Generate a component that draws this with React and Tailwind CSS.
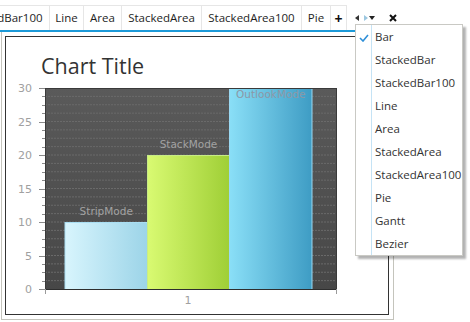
import React from "react";

const tabs = [
    { label: "StackedBar100", w: "w-[94px]", shift: "-ml-[44px]" },
    { label: "Line", w: "w-[34px]" },
    { label: "Area", w: "w-[38px]" },
    { label: "StackedArea", w: "w-[80px]" },
    { label: "StackedArea100", w: "w-[100px]" },
    { label: "Pie", w: "w-[29px]" },
];

const menuItems = ["Bar", "StackedBar", "StackedBar100", "Line", "Area", "StackedArea", "StackedArea100", "Pie", "Gantt", "Bezier"];

// plot geometry, in svg units (svg origin sits at page 6,37)
const plot = { x: 39, y: 51, w: 292, h: 201 };
const perUnit = plot.h / 30;

function yFor(v) {
    return plot.y + plot.h - v * perUnit;
}

function Chart() {
    const grid = [];
    for (let i = 1; i < 24; i++) {
        grid.push(plot.y + i * (plot.h / 24));
    }
    const minor = [];
    for (let i = 0; i <= 24; i++) {
        if (i % 4 !== 0) minor.push(plot.y + i * (plot.h / 24));
    }
    const majors = [0, 5, 10, 15, 20, 25, 30];

    const bars = [
        { x: 59, w: 82.5, v: 10, grad: "strip", stroke: "#a9def2", label: "StripMode" },
        { x: 141.5, w: 82, v: 20, grad: "stack", stroke: "#c8ec86", label: "StackMode" },
        { x: 223.5, w: 82.5, v: 30, grad: "outlook", stroke: "#9ad8f2", label: "OutlookMode" },
    ];

    return (
        <svg width="382" height="277" className="block">
            <defs>
                <linearGradient id="plotbg" x1="0" y1="0" x2="0" y2="1">
                    <stop offset="0" stopColor="#5a5a5a" />
                    <stop offset="1" stopColor="#474747" />
                </linearGradient>
                <linearGradient id="strip" x1="0" y1="0" x2="1" y2="0">
                    <stop offset="0" stopColor="#d8f5fd" />
                    <stop offset="1" stopColor="#9cd4e8" />
                </linearGradient>
                <linearGradient id="stack" x1="0" y1="0" x2="1" y2="0">
                    <stop offset="0" stopColor="#d9fa72" />
                    <stop offset="1" stopColor="#9fcf36" />
                </linearGradient>
                <linearGradient id="outlook" x1="0" y1="0" x2="1" y2="0">
                    <stop offset="0" stopColor="#8adff7" />
                    <stop offset="1" stopColor="#3e9cc4" />
                </linearGradient>
                <clipPath id="plotclip">
                    <rect x={plot.x} y={plot.y} width={plot.w} height={plot.h} />
                </clipPath>
            </defs>

            <text x="35" y="37" fontFamily="'Open Sans', sans-serif" fontSize="21.5" fill="#333333">
                Chart Title
            </text>

            <rect x={plot.x} y={plot.y} width={plot.w} height={plot.h} fill="url(#plotbg)" />
            {grid.map(y => (
                <line key={y} x1={plot.x} x2={plot.x + plot.w} y1={y} y2={y} stroke="#6a6a6a" strokeWidth="1" strokeDasharray="2 1" />
            ))}

            <g clipPath="url(#plotclip)">
                {bars.map(b => (
                    <rect
                        key={b.label}
                        x={b.x}
                        y={yFor(b.v) + 0.5}
                        width={b.w}
                        height={b.v * perUnit}
                        fill={`url(#${b.grad})`}
                        stroke={b.stroke}
                        strokeWidth="1"
                    />
                ))}
                {bars.map(b => (
                    <text
                        key={b.label + "-l"}
                        x={b.x + b.w / 2}
                        y={b.v === 30 ? yFor(b.v) + 10 : yFor(b.v) - 7}
                        textAnchor="middle"
                        fontFamily="'DejaVu Sans', sans-serif"
                        fontSize="10.5"
                        fill={b.v === 30 ? "#8c98a6" : "#a2a2a2"}
                    >
                        {b.label}
                    </text>
                ))}
            </g>

            <rect x={plot.x + 0.5} y={plot.y + 0.5} width={plot.w - 1} height={plot.h} fill="none" stroke="#3a3a3a" strokeWidth="1" />
            <line x1={plot.x} x2={plot.x + plot.w} y1={plot.y + plot.h + 0.5} y2={plot.y + plot.h + 0.5} stroke="#2e2e2e" />
            <line x1={plot.x + 0.5} x2={plot.x + 0.5} y1={plot.y + plot.h} y2={plot.y + plot.h + 5} stroke="#9a9a9a" />
            <line x1={plot.x + plot.w - 0.5} x2={plot.x + plot.w - 0.5} y1={plot.y + plot.h} y2={plot.y + plot.h + 5} stroke="#9a9a9a" />

            {majors.map(v => (
                <g key={v}>
                    <line x1={plot.x - 6} x2={plot.x} y1={Math.round(yFor(v)) + 0.5} y2={Math.round(yFor(v)) + 0.5} stroke="#8a8a8a" />
                    <text x={plot.x - 13} y={yFor(v) + 4} textAnchor="end" fontFamily="'DejaVu Sans', sans-serif" fontSize="11" fill="#a0a0a0">
                        {v}
                    </text>
                </g>
            ))}
            {minor.map(y => (
                <line key={y} x1={plot.x - 3} x2={plot.x} y1={Math.round(y) + 0.5} y2={Math.round(y) + 0.5} stroke="#8a8a8a" />
            ))}

            <text x="182" y="267" textAnchor="middle" fontFamily="'DejaVu Sans', sans-serif" fontSize="11" fill="#a0a0a0">
                1
            </text>
        </svg>
    );
}

function TabStrip() {
    return (
        <div className="flex h-[30px] items-end">
            <div className="flex h-[25px] w-[348px] overflow-hidden">
                {tabs.map(t => (
                    <div
                        key={t.label}
                        className={`${t.w} ${t.shift || ""} flex h-full shrink-0 items-center justify-center border-r border-t border-[#e6e6e6] bg-white text-[11.5px] text-[#1e1e1e]`}
                    >
                        {t.label}
                    </div>
                ))}
                <div className="flex h-full w-[16px] shrink-0 items-center justify-center border-r border-t border-[#e6e6e6] text-[14px] font-bold text-[#111]">
                    +
                </div>
            </div>
            <div className="flex h-[25px] items-center pl-[7px]">
                <svg width="20" height="8" viewBox="0 0 20 8">
                    <polygon points="0,4 4,1 4,7" fill="#333" />
                    <polygon points="9,1 13,4 9,7" fill="#9cc7e0" />
                    <polygon points="14,2 20,2 17,6" fill="#222" />
                </svg>
                <svg width="8" height="8" viewBox="0 0 8 8" className="ml-[14px]">
                    <path d="M1 1 L7 7 M7 1 L1 7" stroke="#111" strokeWidth="2" />
                </svg>
            </div>
        </div>
    );
}

function Menu() {
    return (
        <div className="absolute left-[355px] top-[24px] w-[108px] border border-[#c9c9c4] bg-white shadow-[3px_3px_2px_rgba(0,0,0,0.3)]">
            <div className="flex">
                <div className="w-[16px] border-r border-[#c5e3f5]">
                    <svg width="10" height="8" viewBox="0 0 10 8" className="ml-[3px] mt-[9px]">
                        <path d="M1 4 L4 7 L9 1" stroke="#2e8fd8" strokeWidth="1.6" fill="none" />
                    </svg>
                </div>
                <div className="flex-1">
                    {menuItems.map(item => (
                        <div key={item} className="flex h-[23px] items-center pl-[3px] text-[11.5px] text-[#333]">
                            {item}
                        </div>
                    ))}
                </div>
            </div>
        </div>
    );
}

export default function App() {
    return (
        <div className="relative h-[322px] w-[470px] overflow-hidden bg-white" style={{ fontFamily: "'Open Sans', 'Noto Sans', sans-serif" }}>
            <TabStrip />
            <div className="h-[2px] w-[394px] bg-[#1c9ad8]" />
            <div className="ml-[1px] h-[288px] w-[393px] border-x border-b border-[#c4c4bc] pl-[3px] pr-[4px] pt-[4px]">
                <div className="h-[279px] w-[384px] border border-[#333] bg-white">
                    <Chart />
                </div>
            </div>
            <Menu />
        </div>
    );
}
